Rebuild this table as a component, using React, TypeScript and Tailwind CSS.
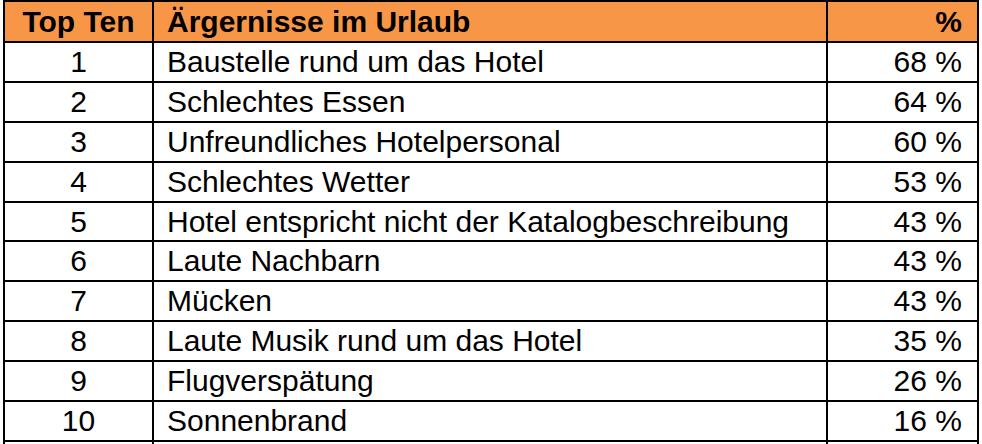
const rows: [string, string, string][] = [
  ["1", "Baustelle rund um das Hotel", "68 %"],
  ["2", "Schlechtes Essen", "64 %"],
  ["3", "Unfreundliches Hotelpersonal", "60 %"],
  ["4", "Schlechtes Wetter", "53 %"],
  ["5", "Hotel entspricht nicht der Katalogbeschreibung", "43 %"],
  ["6", "Laute Nachbarn", "43 %"],
  ["7", "Mücken", "43 %"],
  ["8", "Laute Musik rund um das Hotel", "35 %"],
  ["9", "Flugverspätung", "26 %"],
  ["10", "Sonnenbrand", "16 %"],
];

export default function App() {
  return (
    <div
      className="h-[444px] w-[982px] overflow-hidden bg-white pl-[3px] text-black"
      style={{ fontFamily: '"Liberation Sans", Arial, sans-serif' }}
    >
      <table className="w-[976px] border-collapse text-[30px] leading-none">
        <thead>
          <tr className="h-[41px] bg-[#f79646]">
            <th className="w-[149px] border-2 border-black text-center font-bold">Top Ten</th>
            <th className="w-[674px] border-2 border-black pl-[13px] text-left font-bold">
              Ärgernisse im Urlaub
            </th>
            <th className="border-2 border-black pr-[15px] text-right font-bold">%</th>
          </tr>
        </thead>
        <tbody>
          {rows.map(([n, label, pct]) => (
            <tr key={n} className="h-[39.9px]">
              <td className="border-2 border-black text-center">{n}</td>
              <td className="border-2 border-black pl-[13px]">{label}</td>
              <td className="border-2 border-black pr-[15px] text-right">{pct}</td>
            </tr>
          ))}
          <tr className="h-[39.9px]">
            <td className="border-2 border-black" />
            <td className="border-2 border-black" />
            <td className="border-2 border-black" />
          </tr>
        </tbody>
      </table>
    </div>
  );
}
